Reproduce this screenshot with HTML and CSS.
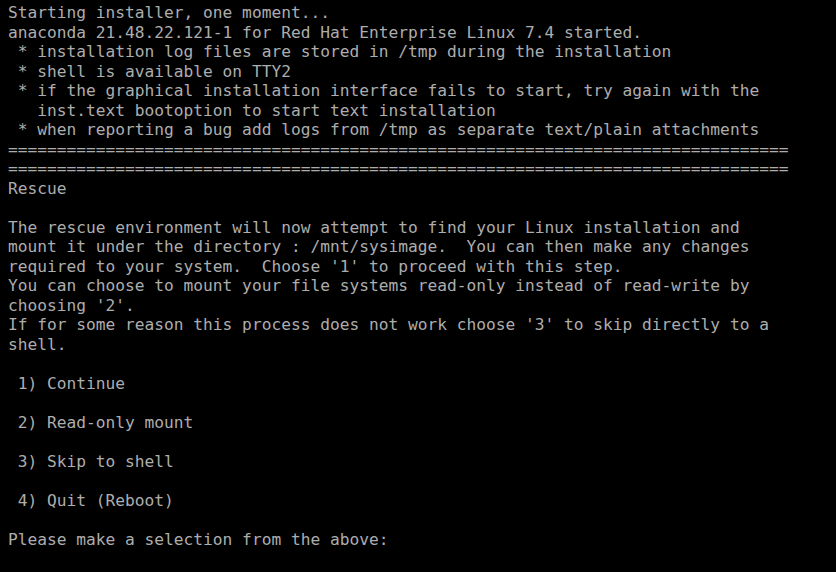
FILE: index.html
```html
<!DOCTYPE html>
<html>
<head>
<meta charset="utf-8">
<link rel="stylesheet" href="styles.css">
</head>
<body>
<pre class="console">Starting installer, one moment...
anaconda 21.48.22.121-1 for Red Hat Enterprise Linux 7.4 started.
 * installation log files are stored in /tmp during the installation
 * shell is available on TTY2
 * if the graphical installation interface fails to start, try again with the
   inst.text bootoption to start text installation
 * when reporting a bug add logs from /tmp as separate text/plain attachments
================================================================================
================================================================================
Rescue

The rescue environment will now attempt to find your Linux installation and
mount it under the directory : /mnt/sysimage.  You can then make any changes
required to your system.  Choose '1' to proceed with this step.
You can choose to mount your file systems read-only instead of read-write by
choosing '2'.
If for some reason this process does not work choose '3' to skip directly to a
shell.

 1) Continue

 2) Read-only mount

 3) Skip to shell

 4) Quit (Reboot)

Please make a selection from the above: </pre>
</body>
</html>
```
FILE: styles.css
```css
html, body {
  margin: 0;
  padding: 0;
  background: #000;
  width: 836px;
  height: 572px;
  overflow: hidden;
}
.console {
  margin: 0;
  padding: 3px 0 0 8px;
  font-family: "DejaVu Sans Mono", "Liberation Mono", monospace;
  font-size: 16.22px;
  line-height: 19.52px;
  color: #adadad;
  white-space: pre;
}
```
